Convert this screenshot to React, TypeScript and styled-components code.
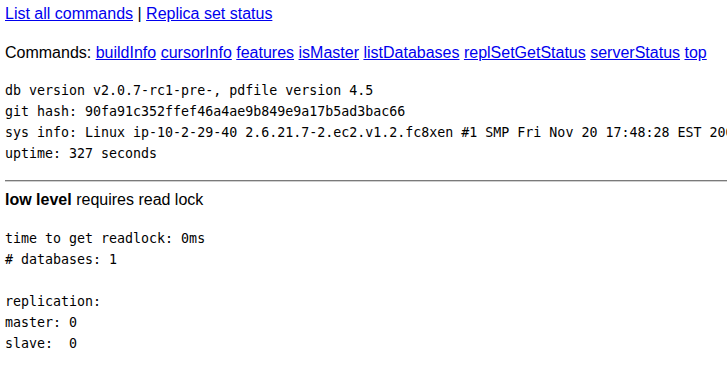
import React from "react";
import styled, { createGlobalStyle } from "styled-components";

const GlobalStyle = createGlobalStyle`
  html, body {
    margin: 0;
    padding: 0;
    background: #ffffff;
  }
  body {
    font-family: "Liberation Sans", Arial, sans-serif;
    font-size: 16px;
    color: #000000;
    overflow: hidden;
  }
`;

const Page = styled.div`
  padding: 5px 0 0 5px;
  display: flex;
  flex-direction: column;
`;

const LinkLine = styled.div<{ $gap?: number }>`
  margin-top: ${({ $gap }) => $gap || 0}px;
  line-height: 18.4px;
  white-space: nowrap;
`;

const Link = styled.a`
  color: #0000ee;
  text-decoration: underline;
`;

const Pre = styled.pre<{ $gap?: number }>`
  margin: ${({ $gap }) => $gap || 0}px 0 0 0;
  font-family: "DejaVu Sans Mono", "Liberation Mono", monospace;
  font-size: 13.3px;
  line-height: 21px;
  white-space: pre;
`;

const Rule = styled.hr`
  margin: 16px 0 0 0;
  height: 0;
  border: none;
  border-top: 1px solid #7a7a7a;
  border-bottom: 1px solid #d0d0d0;
`;

const Heading = styled.div`
  margin-top: 9px;
  line-height: 18.4px;
`;

const commands = [
  "buildInfo",
  "cursorInfo",
  "features",
  "isMaster",
  "listDatabases",
  "replSetGetStatus",
  "serverStatus",
  "top",
];

const App = () => {
  return (
    <>
      <GlobalStyle />
      <Page>
        <LinkLine>
          <Link href="#">List all commands</Link> | <Link href="#">Replica set status</Link>
        </LinkLine>
        <LinkLine $gap={21}>
          Commands:{" "}
          {commands.map((c, i) => (
            <React.Fragment key={c}>
              <Link href="#">{c}</Link>
              {i < commands.length - 1 ? " " : ""}
            </React.Fragment>
          ))}
        </LinkLine>
        <Pre $gap={17}>
          {`db version v2.0.7-rc1-pre-, pdfile version 4.5
git hash: 90fa91c352ffef46a4ae9b849e9a17b5ad3bac66
sys info: Linux ip-10-2-29-40 2.6.21.7-2.ec2.v1.2.fc8xen #1 SMP Fri Nov 20 17:48:28 EST 2009 x86_64 BOOST_LIB_VERSION=1_41
uptime: 327 seconds`}
        </Pre>
        <Rule />
        <Heading>
          <b>low level</b> requires read lock
        </Heading>
        <Pre $gap={19}>
          {`time to get readlock: 0ms
# databases: 1

replication:
master: 0
slave:  0`}
        </Pre>
      </Page>
    </>
  );
};

export default App;
